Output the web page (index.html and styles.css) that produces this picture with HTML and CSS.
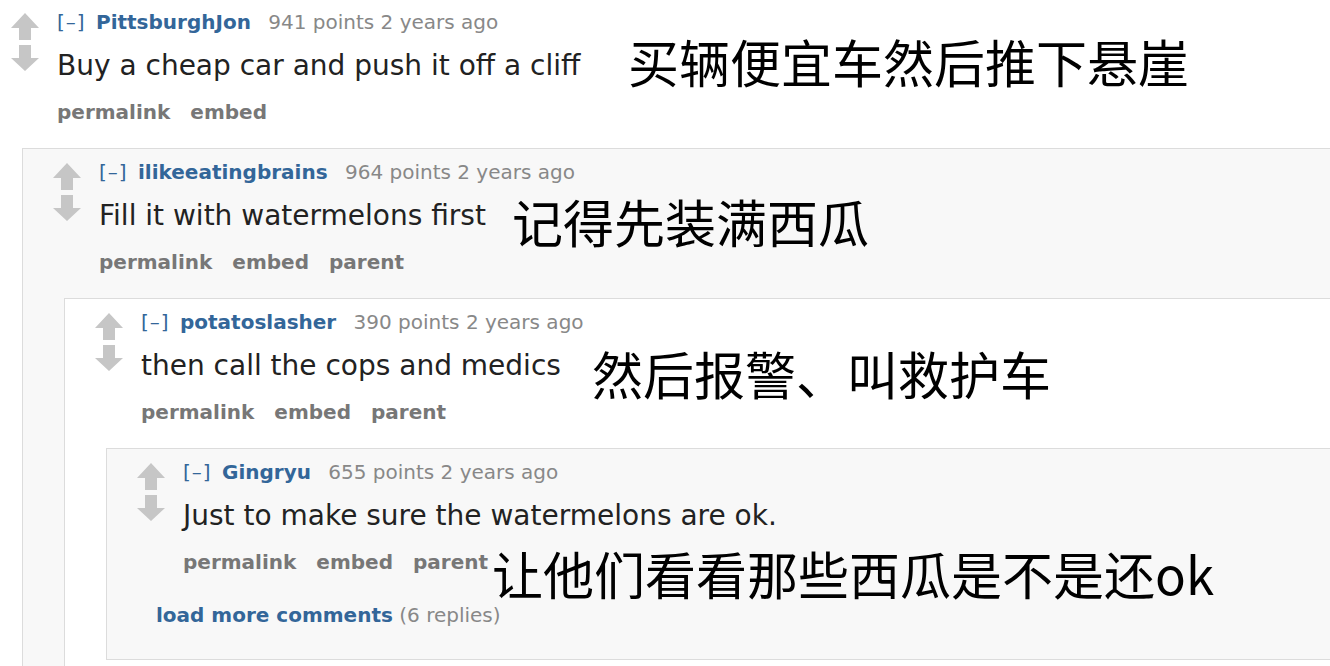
FILE: index.html
```html
<!DOCTYPE html>
<html lang="zh-CN">
<head>
    <meta charset="UTF-8">
    <meta name="viewport" content="width=device-width, initial-scale=1.0">
    <title>Comments</title>
    <link rel="stylesheet" href="styles.css">
</head>
<body>
    <div class="commentarea">
        <div class="comment top">
            <div class="midcol">
                <svg class="arrows" width="28" height="58" viewBox="0 0 28 58">
                    <path d="M14 0 L28 15 L20 15 L20 27 L8 27 L8 15 L0 15 Z"/>
                    <path d="M8 32 L20 32 L20 45 L28 45 L14 58 L0 45 L8 45 Z"/>
                </svg>
            </div>
            <div class="entry">
                <p class="tagline">
                    <a class="expand">[–]</a>
                    <a class="author">PittsburghJon</a>
                    <span class="score">941 points 2 years ago</span>
                </p>
                <div class="md">Buy a cheap car and push it off a cliff</div>
                <ul class="flat-list">
                    <li>permalink</li>
                    <li>embed</li>
                </ul>
                <span class="caption c1">买辆便宜车然后推下悬崖</span>
            </div>

            <div class="child">
                <div class="comment nested odd">
                    <div class="midcol">
                        <svg class="arrows" width="28" height="58" viewBox="0 0 28 58">
                            <path d="M14 0 L28 15 L20 15 L20 27 L8 27 L8 15 L0 15 Z"/>
                            <path d="M8 32 L20 32 L20 45 L28 45 L14 58 L0 45 L8 45 Z"/>
                        </svg>
                    </div>
                    <div class="entry">
                        <p class="tagline">
                            <a class="expand">[–]</a>
                            <a class="author">ilikeeatingbrains</a>
                            <span class="score">964 points 2 years ago</span>
                        </p>
                        <div class="md">Fill it with watermelons first</div>
                        <ul class="flat-list">
                            <li>permalink</li>
                            <li>embed</li>
                            <li>parent</li>
                        </ul>
                        <span class="caption c2">记得先装满西瓜</span>
                    </div>

                    <div class="child">
                        <div class="comment nested even">
                            <div class="midcol">
                                <svg class="arrows" width="28" height="58" viewBox="0 0 28 58">
                                    <path d="M14 0 L28 15 L20 15 L20 27 L8 27 L8 15 L0 15 Z"/>
                                    <path d="M8 32 L20 32 L20 45 L28 45 L14 58 L0 45 L8 45 Z"/>
                                </svg>
                            </div>
                            <div class="entry">
                                <p class="tagline">
                                    <a class="expand">[–]</a>
                                    <a class="author">potatoslasher</a>
                                    <span class="score">390 points 2 years ago</span>
                                </p>
                                <div class="md">then call the cops and medics</div>
                                <ul class="flat-list">
                                    <li>permalink</li>
                                    <li>embed</li>
                                    <li>parent</li>
                                </ul>
                                <span class="caption c3">然后报警、叫救护车</span>
                            </div>

                            <div class="child">
                                <div class="comment nested odd last">
                                    <div class="midcol">
                                        <svg class="arrows" width="28" height="58" viewBox="0 0 28 58">
                                            <path d="M14 0 L28 15 L20 15 L20 27 L8 27 L8 15 L0 15 Z"/>
                                            <path d="M8 32 L20 32 L20 45 L28 45 L14 58 L0 45 L8 45 Z"/>
                                        </svg>
                                    </div>
                                    <div class="entry">
                                        <p class="tagline">
                                            <a class="expand">[–]</a>
                                            <a class="author">Gingryu</a>
                                            <span class="score">655 points 2 years ago</span>
                                        </p>
                                        <div class="md">Just to make sure the watermelons are ok.</div>
                                        <ul class="flat-list">
                                            <li>permalink</li>
                                            <li>embed</li>
                                            <li>parent</li>
                                        </ul>
                                        <span class="caption c4">让他们看看那些西瓜是不是还ok</span>
                                    </div>
                                    <div class="morechildren">
                                        <a>load more comments</a> <span class="gray">(6 replies)</span>
                                    </div>
                                </div>
                            </div>
                        </div>
                    </div>
                </div>
            </div>
        </div>
    </div>
</body>
</html>
```

FILE: styles.css
```css
body {
    margin: 0;
    background-color: white;
    font-family: "DejaVu Sans", Verdana, sans-serif;
    overflow: hidden;
    height: 666px;
}

.commentarea {
    width: 1420px;
}

.comment {
    display: grid;
    grid-template-columns: 28px 1fr;
    column-gap: 18px;
    align-items: start;
}

.comment.top {
    padding: 9px 0 0 11px;
}

.comment.nested {
    margin-left: 11px;
    padding: 10px 0 20px 30px;
    border: 1px solid #dcdcdc;
    border-right: none;
}

.comment.odd {
    background-color: #f8f8f8;
}

.comment.even {
    background-color: white;
}

.comment.last {
    padding-bottom: 31px;
}

.midcol {
    padding-top: 4px;
}

.arrows {
    display: block;
    fill: #c6c6c6;
}

.entry {
    position: relative;
}

.tagline {
    margin: 0;
    font-size: 20px;
    line-height: 26px;
    color: #888;
    white-space: nowrap;
}

.tagline .expand {
    color: #369;
    letter-spacing: 1px;
    margin-right: 4px;
}

.tagline .author {
    color: #369;
    font-weight: bold;
    margin-right: 11px;
}

.md {
    margin-top: 13px;
    font-size: 28px;
    line-height: 36px;
    color: #222;
    white-space: nowrap;
}

.flat-list {
    list-style: none;
    margin: 15px 0 0;
    padding: 0;
    display: flex;
    gap: 20px;
    font-size: 20px;
    line-height: 26px;
    font-weight: bold;
    color: #777;
}

.child {
    grid-column: 1 / -1;
    margin-top: 23px;
}

.morechildren {
    grid-column: 1 / -1;
    margin: 27px 0 0 19px;
    font-size: 20px;
    line-height: 26px;
    color: #888;
}

.morechildren a {
    color: #369;
    font-weight: bold;
}

.caption {
    position: absolute;
    font-family: "Noto Sans CJK SC", sans-serif;
    font-size: 51px;
    line-height: 51px;
    color: black;
    white-space: nowrap;
}

.c1 {
    left: 571px;
    top: 27px;
}

.c2 {
    left: 413px;
    top: 37px;
}

.c3 {
    left: 451px;
    top: 39px;
}

.c4 {
    left: 309px;
    top: 89px;
}
```
